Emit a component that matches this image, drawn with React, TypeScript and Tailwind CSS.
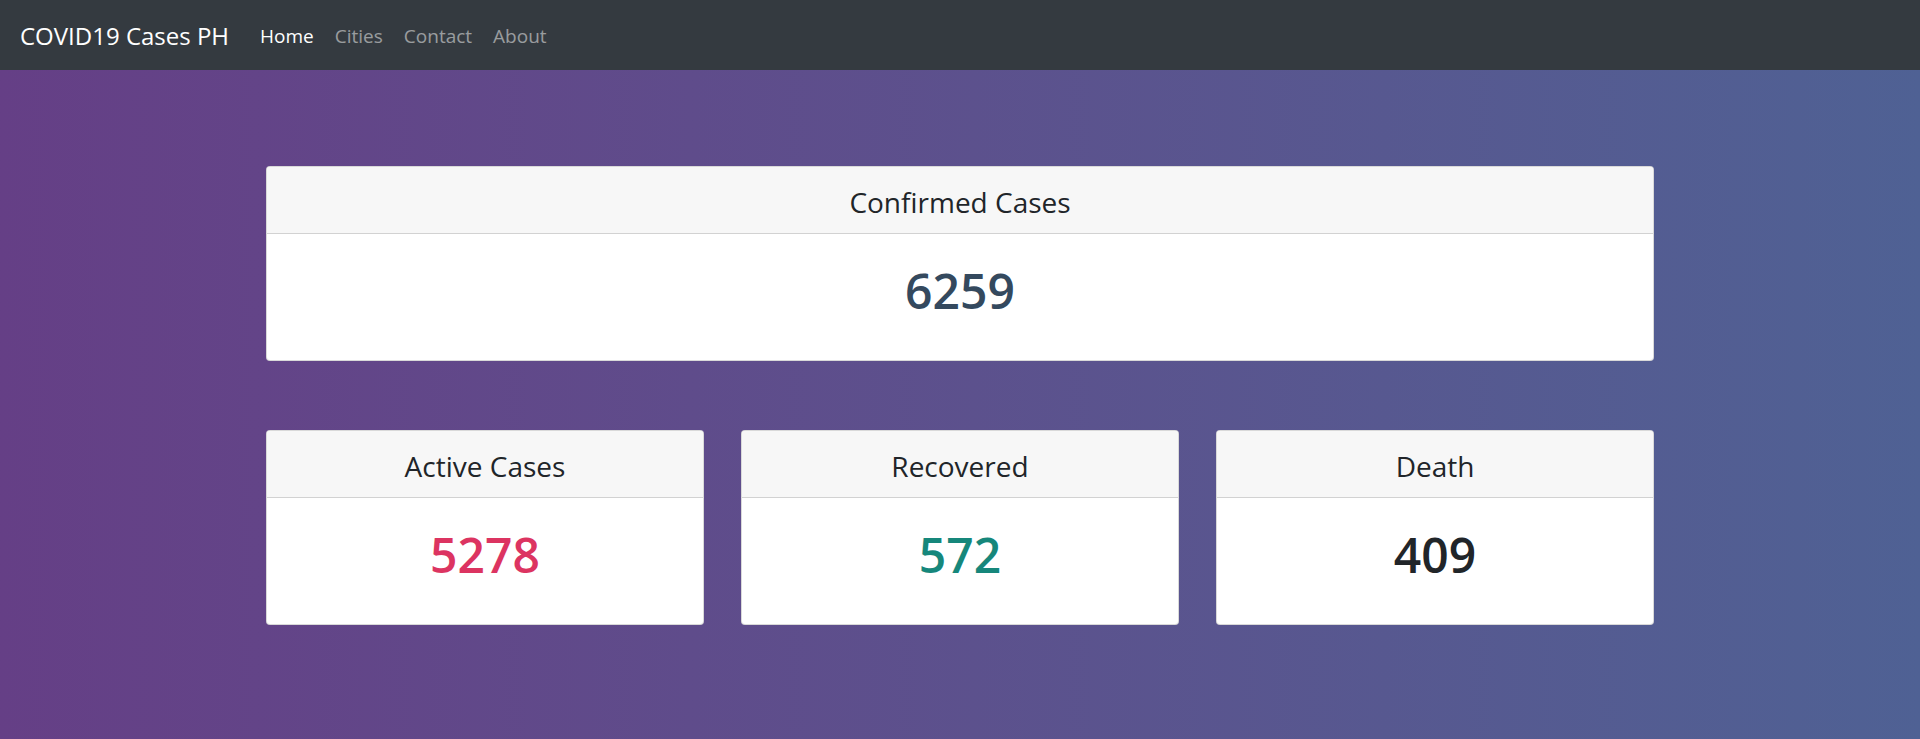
const NAV = [
  { label: "Home", active: true },
  { label: "Cities", active: false },
  { label: "Contact", active: false },
  { label: "About", active: false },
];

const STATS = [
  { title: "Active Cases", value: "5278", color: "text-[#dc3461]" },
  { title: "Recovered", value: "572", color: "text-[#16877b]" },
  { title: "Death", value: "409", color: "text-[#212529]" },
];

function StatCard({ title, value, color }: { title: string; value: string; color: string }) {
  return (
    <div className="flex flex-col bg-white rounded-[4px] border border-black/15 overflow-hidden">
      <div className="h-[67px] flex items-center justify-center bg-[#f7f7f7] border-b border-black/15">
        <span className="text-[28px] text-[#212529] pt-[3px]">{title}</span>
      </div>
      <div className="h-[126px] flex items-center justify-center pb-[12px]">
        <span className={`text-[48px] font-semibold leading-none ${color}`}>{value}</span>
      </div>
    </div>
  );
}

export default function App() {
  return (
    <div className="min-h-screen flex flex-col font-['Open_Sans',sans-serif]">
      {/* Navbar */}
      <nav className="h-[70px] flex items-center bg-[#343a40] pl-[20px] pr-[16px] pt-[2px] shrink-0">
        <a className="text-[24px] text-white mr-[22px]">COVID19 Cases PH</a>
        <div className="flex items-center gap-[3px]">
          {NAV.map(({ label, active }) => (
            <a
              key={label}
              className={
                active
                  ? "px-[9px] text-[19px] text-white"
                  : "px-[9px] text-[19px] text-white/50"
              }
            >
              {label}
            </a>
          ))}
        </div>
      </nav>

      {/* Content */}
      <main className="h-[669px] bg-gradient-to-r from-[#653f86] to-[#4f6194] flex flex-col items-center pt-[96px]">
        <div className="w-[1388px] flex flex-col gap-[69px]">
          <StatCard title="Confirmed Cases" value="6259" color="text-[#34495e]" />
          <div className="grid grid-cols-3 gap-[37px]">
            {STATS.map((s) => (
              <StatCard key={s.title} {...s} />
            ))}
          </div>
        </div>
      </main>
    </div>
  );
}
